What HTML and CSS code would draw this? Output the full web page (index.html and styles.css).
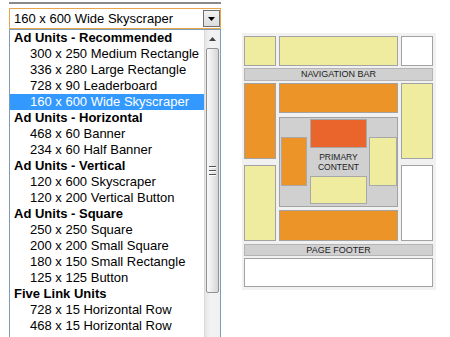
FILE: index.html
```html
<!DOCTYPE html>
<html lang="en">
<head>
  <meta charset="UTF-8" />
  <title>Ad Unit Picker</title>
  <link rel="stylesheet" href="styles.css">
</head>
<body>

  <div class="page">
    <div class="picker">
      <div class="rule"></div>

      <div class="select">
        <span class="value">160 x 600 Wide Skyscraper</span>
        <span class="arrow-btn">
          <svg width="7" height="4" viewBox="0 0 7 4"><polygon points="0,0 7,0 3.5,4" fill="#000"/></svg>
        </span>
      </div>

      <div class="list">
        <ul class="options">
          <li class="group">Ad Units - Recommended</li>
          <li>300 x 250 Medium Rectangle</li>
          <li>336 x 280 Large Rectangle</li>
          <li>728 x 90 Leaderboard</li>
          <li class="selected">160 x 600 Wide Skyscraper</li>
          <li class="group">Ad Units - Horizontal</li>
          <li>468 x 60 Banner</li>
          <li>234 x 60 Half Banner</li>
          <li class="group">Ad Units - Vertical</li>
          <li>120 x 600 Skyscraper</li>
          <li>120 x 200 Vertical Button</li>
          <li class="group">Ad Units - Square</li>
          <li>250 x 250 Square</li>
          <li>200 x 200 Small Square</li>
          <li>180 x 150 Small Rectangle</li>
          <li>125 x 125 Button</li>
          <li class="group">Five Link Units</li>
          <li>728 x 15 Horizontal Row</li>
          <li>468 x 15 Horizontal Row</li>
        </ul>
        <div class="scrollbar">
          <div class="scroll-up">
            <svg width="7" height="4" viewBox="0 0 7 4"><polygon points="0,4 7,4 3.5,0" fill="#444"/></svg>
          </div>
          <div class="thumb">
            <span class="grip"></span>
            <span class="grip"></span>
            <span class="grip"></span>
          </div>
        </div>
      </div>
    </div>

    <div class="mockup">
      <div class="row top-row">
        <div class="cell yellow side"></div>
        <div class="cell yellow wide"></div>
        <div class="cell white side"></div>
      </div>

      <div class="bar">NAVIGATION BAR</div>

      <div class="row middle">
        <div class="col side">
          <div class="cell orange tall"></div>
          <div class="cell yellow fill"></div>
        </div>
        <div class="col wide">
          <div class="cell orange strip"></div>
          <div class="content">
            <div class="cell red c-top"></div>
            <div class="cell orange c-left"></div>
            <div class="c-text">PRIMARY<br>CONTENT</div>
            <div class="cell yellow c-right"></div>
            <div class="cell yellow c-bottom"></div>
          </div>
          <div class="cell orange fill"></div>
        </div>
        <div class="col side">
          <div class="cell yellow tall"></div>
          <div class="cell white fill"></div>
        </div>
      </div>

      <div class="bar footer">PAGE FOOTER</div>
      <div class="cell white bottom"></div>
    </div>
  </div>

</body>
</html>
```

FILE: styles.css
```css
body {
  margin: 0;
  background: #fff;
  font-family: 'Liberation Sans', Arial, sans-serif;
  overflow: hidden;
  height: 337px;
}

.page {
  display: flex;
  align-items: flex-start;
}

/* dropdown */

.picker {
  margin-left: 9px;
  width: 212px;
  padding-top: 2px;
}

.rule {
  height: 2px;
  background: #8a8a8a;
  margin-bottom: 4px;
}

.select {
  box-sizing: border-box;
  height: 21px;
  border: 1px solid #e8a64e;
  display: flex;
  align-items: center;
  justify-content: space-between;
  padding-left: 4px;
  font-size: 13px;
  color: #000;
}

.arrow-btn {
  box-sizing: border-box;
  width: 17px;
  height: 17px;
  border: 1px solid #707070;
  background: linear-gradient(#f2f2f2, #dcdcdc);
  display: flex;
  align-items: center;
  justify-content: center;
}

.list {
  box-sizing: border-box;
  height: 320px;
  border: 1px solid #7f9db9;
  display: flex;
  overflow: hidden;
}

.options {
  list-style: none;
  margin: 0;
  padding: 0;
  flex: 1;
  font-size: 13px;
}

.options li {
  height: 16px;
  line-height: 16px;
  padding-left: 20px;
  white-space: nowrap;
  color: #000;
}

.options li.group {
  padding-left: 4px;
  font-weight: bold;
}

.options li.selected {
  background: #3399ff;
  color: #fff;
}

.scrollbar {
  width: 16px;
  box-sizing: border-box;
  border-left: 1px solid #dadada;
  background: linear-gradient(to right, #e6e6e6, #f3f3f3 40%, #f0f0f0);
}

.scroll-up {
  height: 17px;
  display: flex;
  align-items: center;
  justify-content: center;
}

.thumb {
  box-sizing: border-box;
  margin: 1px 1px 0 1px;
  height: 245px;
  border: 1px solid #929292;
  border-radius: 2px;
  background: linear-gradient(to right, #fafafa, #e9e9e9 50%, #d5d5d5);
  display: flex;
  flex-direction: column;
  align-items: center;
  justify-content: center;
  gap: 2px;
}

.grip {
  width: 7px;
  height: 1px;
  background: #555;
  border-bottom: 1px solid #fff;
}

/* layout mockup */

.mockup {
  box-sizing: border-box;
  width: 194px;
  margin: 33px 0 0 21px;
  padding: 3px 3px 3px 2px;
  background: #f1f1f1;
  display: flex;
  flex-direction: column;
  gap: 2px;
}

.row {
  display: flex;
  gap: 3px;
}

.top-row {
  height: 30px;
}

.cell {
  box-sizing: border-box;
  border: 1px solid #a2a2a2;
}

.yellow { background: #efeb9f; }
.white { background: #fff; }
.orange { background: #ec9428; }
.red { background: #e9652b; }

.side { width: 32px; }
.wide { width: 119px; }

.bar {
  box-sizing: border-box;
  height: 13px;
  border: 1px solid #b4b4b4;
  background: #d0d0d0;
  color: #222;
  font-size: 9px;
  line-height: 11px;
  text-align: center;
}

.middle {
  height: 158px;
  margin-bottom: 1px;
}

.col {
  display: flex;
  flex-direction: column;
}

.col.side { gap: 6px; }

.tall { height: 76px; }
.fill { flex: 1; }

.strip {
  height: 30px;
  margin-bottom: 4px;
}

.content {
  box-sizing: border-box;
  height: 90px;
  margin-bottom: 3px;
  border: 1px solid #a2a2a2;
  background: #d0d0d0;
  padding: 1px 1px 2px 1px;
  display: grid;
  grid-template-columns: 26px 57px 27px;
  grid-template-rows: 18px 11px 28px 10px 18px;
  column-gap: 3px;
}

.content .cell { border-color: #a8a8a8; }
.content .c-right { margin-left: -1px; width: 28px; }

.c-top { grid-column: 2; grid-row: 1 / 3; }
.c-left { grid-column: 1; grid-row: 2 / 5; }
.c-right { grid-column: 3; grid-row: 2 / 5; }
.c-bottom { grid-column: 2; grid-row: 4 / 6; }

.c-text {
  grid-column: 2;
  grid-row: 3;
  color: #222;
  font-size: 8.5px;
  line-height: 10px;
  text-align: center;
  padding-top: 4px;
}

.footer {
  height: 12px;
  line-height: 10px;
}

.bottom {
  height: 29px;
}
```
